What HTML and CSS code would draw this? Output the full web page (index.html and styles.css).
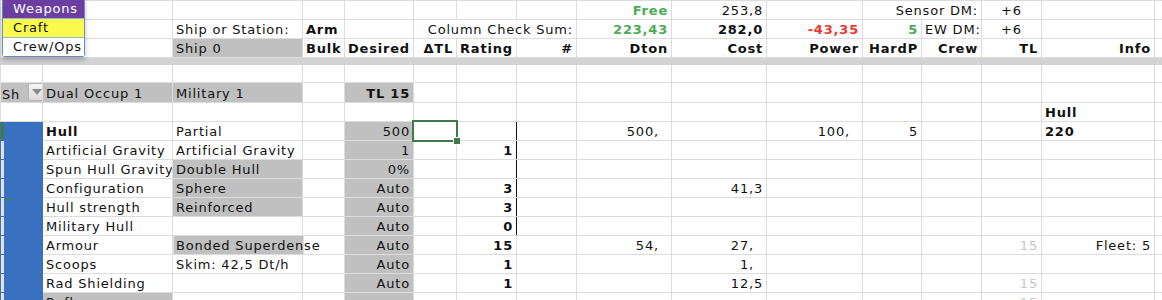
FILE: index.html
```html
<!DOCTYPE html>
<html lang="en">
<head>
    <meta charset="UTF-8">
    <title>Ship Design Sheet</title>
    <link rel="stylesheet" href="styles.css">
</head>
<body>
    <div class="sheet">
        <div class="tabs">
            <div class="tab tab-weapons">Weapons</div>
            <div class="tab tab-craft">Craft</div>
            <div class="tab tab-crew">Crew/Ops</div>
        </div>

        <table class="grid">
            <colgroup>
                <col style="width:42px"><col style="width:130px"><col style="width:130px">
                <col style="width:42px"><col style="width:69px"><col style="width:43px">
                <col style="width:60px"><col style="width:60px"><col style="width:95px">
                <col style="width:95px"><col style="width:96px"><col style="width:59px">
                <col style="width:60px"><col style="width:60px"><col style="width:113px">
                <col style="width:40px">
            </colgroup>
            <tr>
                <td></td><td></td><td></td><td></td><td></td><td></td><td></td><td></td>
                <td class="r b grn">Free</td>
                <td class="r">253,8</td>
                <td></td>
                <td class="r" colspan="2">Sensor DM:</td>
                <td class="c">+6</td>
                <td></td><td></td>
            </tr>
            <tr>
                <td></td><td></td>
                <td>Ship or Station:</td>
                <td class="b">Arm</td>
                <td></td>
                <td class="r" colspan="3">Column Check Sum:</td>
                <td class="r b grn">223,43</td>
                <td class="r b">282,0</td>
                <td class="r b red">-43,35</td>
                <td class="r b grn">5</td>
                <td class="r clip">EW DM:</td>
                <td class="c">+6</td>
                <td></td><td></td>
            </tr>
            <tr class="head">
                <td></td><td></td>
                <td class="g">Ship 0</td>
                <td class="b">Bulk</td>
                <td class="b">Desired</td>
                <td class="r b">ΔTL</td>
                <td class="b">Rating</td>
                <td class="r b">#</td>
                <td class="r b">Dton</td>
                <td class="r b">Cost</td>
                <td class="r b">Power</td>
                <td class="r b">HardP</td>
                <td class="r b">Crew</td>
                <td class="r b">TL</td>
                <td class="r b">Info</td>
                <td></td>
            </tr>
            <tr class="freeze"><td colspan="16"></td></tr>
            <tr class="short">
                <td></td><td></td><td></td><td></td><td></td><td></td><td></td><td></td>
                <td></td><td></td><td></td><td></td><td></td><td></td><td></td><td></td>
            </tr>
            <tr>
                <td class="g pick">
                    <span class="pick-text">Sh</span>
                    <span class="pick-btn"><span class="arrow"></span></span>
                </td>
                <td class="g">Dual Occup 1</td>
                <td class="g">Military 1</td>
                <td></td>
                <td class="g r b">TL 15</td>
                <td></td><td></td><td></td><td></td><td></td><td></td><td></td><td></td><td></td><td></td><td></td>
            </tr>
            <tr>
                <td></td><td></td><td></td><td></td><td></td><td></td><td></td><td></td>
                <td></td><td></td><td></td><td></td><td></td><td></td>
                <td class="b">Hull</td>
                <td></td>
            </tr>
            <tr>
                <td class="side side-top"></td>
                <td class="b">Hull</td>
                <td>Partial</td>
                <td></td>
                <td class="g r">500</td>
                <td class="sel"><div class="sel-box"><span class="sel-handle"></span></div></td>
                <td class="edge"></td>
                <td></td>
                <td class="r">500,<span class="ghost">0</span></td>
                <td></td>
                <td class="r">100,<span class="ghost">0</span></td>
                <td class="r">5</td>
                <td></td><td></td>
                <td class="b">220</td>
                <td></td>
            </tr>
            <tr>
                <td class="side"></td>
                <td>Artificial Gravity</td>
                <td>Artificial Gravity</td>
                <td></td>
                <td class="g r">1</td>
                <td></td>
                <td class="edge r b">1</td>
                <td></td><td></td><td></td><td></td><td></td><td></td><td></td><td></td><td></td>
            </tr>
            <tr>
                <td class="side"></td>
                <td class="clip">Spun Hull Gravity</td>
                <td class="g">Double Hull</td>
                <td></td>
                <td class="g r">0%</td>
                <td></td>
                <td class="edge"></td>
                <td></td><td></td><td></td><td></td><td></td><td></td><td></td><td></td><td></td>
            </tr>
            <tr>
                <td class="side"></td>
                <td>Configuration</td>
                <td class="g">Sphere</td>
                <td></td>
                <td class="g r">Auto</td>
                <td></td>
                <td class="edge r b">3</td>
                <td></td><td></td>
                <td class="r">41,3</td>
                <td></td><td></td><td></td><td></td><td></td><td></td>
            </tr>
            <tr>
                <td class="side"><span class="marker"></span></td>
                <td>Hull strength</td>
                <td class="g">Reinforced</td>
                <td></td>
                <td class="g r">Auto</td>
                <td></td>
                <td class="edge r b">3</td>
                <td></td><td></td><td></td><td></td><td></td><td></td><td></td><td></td><td></td>
            </tr>
            <tr>
                <td class="side"></td>
                <td>Military Hull</td>
                <td></td>
                <td></td>
                <td class="g r">Auto</td>
                <td></td>
                <td class="edge r b">0</td>
                <td></td><td></td><td></td><td></td><td></td><td></td><td></td><td></td><td></td>
            </tr>
            <tr>
                <td class="side"></td>
                <td>Armour</td>
                <td class="spill" colspan="2">Bonded Superdense</td>
                <td class="g r">Auto</td>
                <td></td>
                <td class="r b">15</td>
                <td></td>
                <td class="r">54,<span class="ghost">0</span></td>
                <td class="r">27,<span class="ghost">0</span></td>
                <td></td><td></td><td></td>
                <td class="r lt">15</td>
                <td class="r">Fleet: 5</td>
                <td></td>
            </tr>
            <tr>
                <td class="side"></td>
                <td>Scoops</td>
                <td>Skim: 42,5 Dt/h</td>
                <td></td>
                <td class="g r">Auto</td>
                <td></td>
                <td class="r b">1</td>
                <td></td><td></td>
                <td class="r">1,<span class="ghost">0</span></td>
                <td></td><td></td><td></td><td></td><td></td><td></td>
            </tr>
            <tr>
                <td class="side"></td>
                <td>Rad Shielding</td>
                <td></td>
                <td></td>
                <td class="g r">Auto</td>
                <td></td>
                <td class="r b">1</td>
                <td></td><td></td>
                <td class="r">12,5</td>
                <td></td><td></td><td></td>
                <td class="r lt">15</td>
                <td></td><td></td>
            </tr>
            <tr>
                <td class="side"></td>
                <td class="g">Reflec</td>
                <td></td>
                <td></td>
                <td class="g r"></td>
                <td></td>
                <td></td>
                <td></td><td></td><td></td><td></td><td></td><td></td>
                <td class="r lt">15</td>
                <td></td><td></td>
            </tr>
        </table>
    </div>
</body>
</html>
```

FILE: styles.css
```css
body {
    margin: 0;
    background: #fff;
    overflow: hidden;
}
.sheet {
    position: relative;
    width: 1162px;
    height: 300px;
    overflow: hidden;
    font-family: "DejaVu Sans", Verdana, sans-serif;
    font-size: 13px;
    letter-spacing: 0.8px;
    color: #111;
}

/* the sheet tab menu floating over the top left */
.tabs {
    position: absolute;
    top: -1px;
    left: 2px;
    width: 81px;
    border: 1px solid #6e8cc4;
    border-radius: 0 0 3px 3px;
    background: #fff;
    box-shadow: 0 3px 5px rgba(0, 0, 0, 0.25);
    z-index: 5;
}
.tab {
    height: 18px;
    line-height: 18px;
    padding-left: 10px;
    border-bottom: 1px solid #9fb2d6;
}
.tab:last-child {
    border-bottom: none;
}
.tab-weapons {
    background: #6b3fa2;
    color: #fff;
}
.tab-craft {
    background: #fbfb4e;
}
.tab-crew {
    background: #fff;
}

/* grid */
.grid {
    table-layout: fixed;
    border-collapse: collapse;
    width: 1194px;
    margin-top: 0;
}
.grid td {
    height: 17px;
    padding: 0 3px 1px 3px;
    border: 1px solid #dcdcdc;
    vertical-align: bottom;
    line-height: 15px;
    white-space: nowrap;
    overflow: hidden;
}
.grid tr.freeze td {
    height: 6px;
    padding: 0;
    background: #d3d3d3;
    border-color: #d3d3d3;
}
.grid tr.short td {
    height: 16px;
}

.r { text-align: right; }
.c { text-align: center; }
.b { font-weight: bold; }
.g { background: #c0c0c0; }
.grn { color: #4bab55; }
.red { color: #ec3a2f; }
.lt { color: #c6c6c6; }
.ghost { visibility: hidden; }
.clip { overflow: hidden; text-overflow: clip; }

.grid td.spill {
    background: linear-gradient(to right, #c0c0c0 130px, transparent 130px);
}

/* dropdown in the first column */
.grid td.pick {
    padding: 0;
}
.pick-text {
    display: inline-block;
    width: 21px;
    overflow: hidden;
    vertical-align: bottom;
    padding-left: 1px;
}
.pick-btn {
    display: inline-block;
    width: 16px;
    height: 16px;
    margin-bottom: 1px;
    vertical-align: bottom;
    background: linear-gradient(#f4f4f4, #dcdcdc);
    border: 1px solid #b5b5b5;
    border-radius: 2px;
    position: relative;
}
.arrow {
    position: absolute;
    left: 3px;
    top: 5px;
    border-left: 5px solid transparent;
    border-right: 5px solid transparent;
    border-top: 6px solid #8a8a8a;
}

/* blue strip on the left */
.grid td.side {
    background: #3a70c0;
    border-color: #3a70c0;
    box-shadow: inset 3px 0 #e2e2e2;
    position: relative;
}
.grid td.side-top {
    box-shadow: inset 3px 0 #3d7c46;
}
.marker {
    position: absolute;
    left: 3px;
    top: -3px;
    border-left: 5px solid transparent;
    border-right: 5px solid transparent;
    border-top: 6px solid #3f8a3a;
}

/* current cell */
.grid td.sel {
    position: relative;
    overflow: visible;
}
.sel-box {
    position: absolute;
    left: -2px;
    top: -2px;
    right: -2px;
    bottom: -2px;
    border: 2px solid #3f7a4d;
}
.sel-handle {
    position: absolute;
    right: -5px;
    bottom: -5px;
    width: 6px;
    height: 6px;
    background: #3f7a4d;
    border: 1px solid #fff;
}

.grid td.edge {
    border-right: 1px solid #111;
}
```
